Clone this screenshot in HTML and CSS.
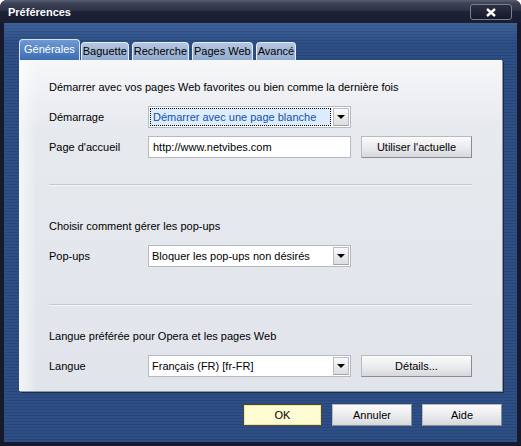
FILE: index.html
```html
<!DOCTYPE html>
<html lang="fr">

<head>
    <meta charset="UTF-8">
    <title>Préférences</title>
    <link rel="stylesheet" href="styles.css">
</head>

<body>
    <div class="window">
        <div class="titlebar">
            <span class="title">Préférences</span>
            <span class="close">
                <svg width="12" height="9" viewBox="0 0 12 9">
                    <path d="M2 1 L10 8 M10 1 L2 8" stroke="#fff" stroke-width="2.4" fill="none" />
                </svg>
            </span>
        </div>
        <div class="frame">
            <ul class="tabs">
                <li class="current">Générales</li>
                <li>Baguette</li>
                <li>Recherche</li>
                <li>Pages Web</li>
                <li>Avancé</li>
            </ul>
            <div class="panel">
                <!-- démarrage -->
                <p class="hint first">Démarrer avec vos pages Web favorites ou bien comme la dernière fois</p>
                <div class="row">
                    <span class="label">Démarrage</span>
                    <div class="combo focus">
                        <span class="value"><span>Démarrer avec une page blanche</span></span>
                        <span class="arrow"></span>
                    </div>
                </div>
                <div class="row">
                    <span class="label">Page d'accueil</span>
                    <div class="field">http://www.netvibes.com</div>
                    <span class="btn">Utiliser l'actuelle</span>
                </div>
                <div class="sep"></div>

                <!-- pop-ups -->
                <p class="hint popups">Choisir comment gérer les pop-ups</p>
                <div class="row">
                    <span class="label">Pop-ups</span>
                    <div class="combo">
                        <span class="value"><span>Bloquer les pop-ups non désirés</span></span>
                        <span class="arrow"></span>
                    </div>
                </div>
                <div class="sep sep2"></div>

                <!-- langue -->
                <p class="hint lang">Langue préférée pour Opera et les pages Web</p>
                <div class="row">
                    <span class="label">Langue</span>
                    <div class="combo">
                        <span class="value"><span>Français (FR) [fr-FR]</span></span>
                        <span class="arrow"></span>
                    </div>
                    <span class="btn">Détails...</span>
                </div>
            </div>
            <div class="actions">
                <span class="btn ok">OK</span>
                <span class="btn">Annuler</span>
                <span class="btn">Aide</span>
            </div>
        </div>
    </div>
</body>

</html>
```

FILE: styles.css
```css
* {
    padding: 0;
    margin: 0;
    list-style: none;
    box-sizing: border-box;
}

body {
    background: #fff;
    font-family: "Liberation Sans", Arial, sans-serif;
    font-size: 11px;
    color: #000;
}

.window {
    width: 521px;
    height: 446px;
    background: #161a2c;
    border-radius: 7px 7px 0 0;
    display: flex;
    flex-direction: column;
}

/* barre de titre */
.titlebar {
    height: 23px;
    padding: 0 9px 0 8px;
    display: flex;
    align-items: center;
    justify-content: space-between;
    border-radius: 7px 7px 0 0;
    background: linear-gradient(#5a6072 0, #3e4458 3px, #2e3348 10px, #1c2034 12px, #1a1e31 23px);
}

.title {
    color: #fff;
    font-weight: bold;
    font-size: 11px;
    padding-top: 1px;
}

.close {
    width: 42px;
    height: 16px;
    margin-top: 1px;
    border: 1px solid #7a8090;
    border-radius: 3px;
    background: linear-gradient(#2c3040, #15182a);
    display: flex;
    align-items: center;
    justify-content: center;
}

/* fond rayé bleu */
.frame {
    flex: 1;
    margin: 0 4px 4px;
    padding: 16px 15px 0;
    background:
        linear-gradient(rgba(90, 130, 190, .35), rgba(90, 130, 190, 0) 20px),
        repeating-linear-gradient(#2d4f86 0, #2d4f86 2px, #284678 2px, #284678 3px);
}

.tabs {
    display: flex;
    align-items: flex-end;
    height: 21px;
}

.tabs li {
    height: 18px;
    padding: 0 1px;
    margin-right: 3px;
    line-height: 17px;
    border: 1px solid #e4ecf6;
    border-bottom: 0;
    border-radius: 4px 4px 0 0;
    background: linear-gradient(#b4c6e0, #92abd0);
    color: #000;
}

.tabs li.current {
    height: 21px;
    padding: 0 4px;
    margin-right: 1px;
    line-height: 19px;
    color: #fff;
    border-color: #d8e4f4;
    background: linear-gradient(#6e9ad4, #3c6db4);
}

.panel {
    height: 331px;
    padding: 21px 30px 0;
    background:
        linear-gradient(90deg, rgba(255, 255, 255, .6), rgba(255, 255, 255, 0) 18px),
        linear-gradient(#f6f7f9, #e6e9ee 70px, #e1e5eb);
    box-shadow: 1px 1px 0 #8d96a6, 2px 2px 0 #1e2a44;
}

.hint {
    height: 13px;
    line-height: 13px;
}

.hint.popups {
    margin-top: 34px;
}

.hint.lang {
    margin-top: 24px;
}

.row {
    display: flex;
    align-items: center;
    height: 22px;
    margin-top: 8px;
}

.hint + .row {
    margin-top: 12px;
}

.label {
    width: 99px;
}

.combo,
.field {
    width: 203px;
    height: 22px;
    border: 1px solid #b3bac4;
    background: #fff;
}

.combo {
    display: flex;
    padding: 1px;
}

.combo .value {
    flex: 1;
    display: flex;
    align-items: center;
    padding-left: 2px;
}

.combo.focus .value {
    padding: 0;
}

.combo.focus .value span {
    flex: 1;
    height: 18px;
    line-height: 16px;
    padding-left: 2px;
    border: 1px dotted #000;
    background: #dcecfd;
    color: #1252a6;
}

.arrow {
    width: 16px;
    margin-left: 2px;
    border: 1px solid #b8bcc3;
    border-bottom-color: #9ea2a9;
    background: linear-gradient(#fafafa, #dcdde0);
    display: flex;
    align-items: center;
    justify-content: center;
}

.arrow::after {
    content: "";
    border-left: 4px solid transparent;
    border-right: 4px solid transparent;
    border-top: 4px solid #000;
}

.field {
    padding: 0 4px;
    line-height: 20px;
}

.btn {
    width: 111px;
    height: 22px;
    margin-left: 10px;
    line-height: 20px;
    text-align: center;
    font-weight: normal;
    border: 1px solid #b6bac2;
    border-bottom-color: #888d95;
    border-right-color: #888d95;
    background: linear-gradient(#fbfbfb, #e8e9eb 60%, #d6d8dc);
}

.sep {
    height: 2px;
    margin-top: 26px;
    border-top: 1px solid #c4c9d1;
    border-bottom: 1px solid #f4f6f8;
}

.sep.sep2 {
    margin-top: 37px;
}

.actions {
    display: flex;
    justify-content: flex-end;
    margin-top: 13px;
}

.actions .btn {
    width: 80px;
}

.actions .btn.ok {
    width: 79px;
    margin-left: 0;
    border: 1px solid #4e4c2c;
    box-shadow: inset 0 0 0 1px #ece4a8;
    background: #fffcd4;
}
```
